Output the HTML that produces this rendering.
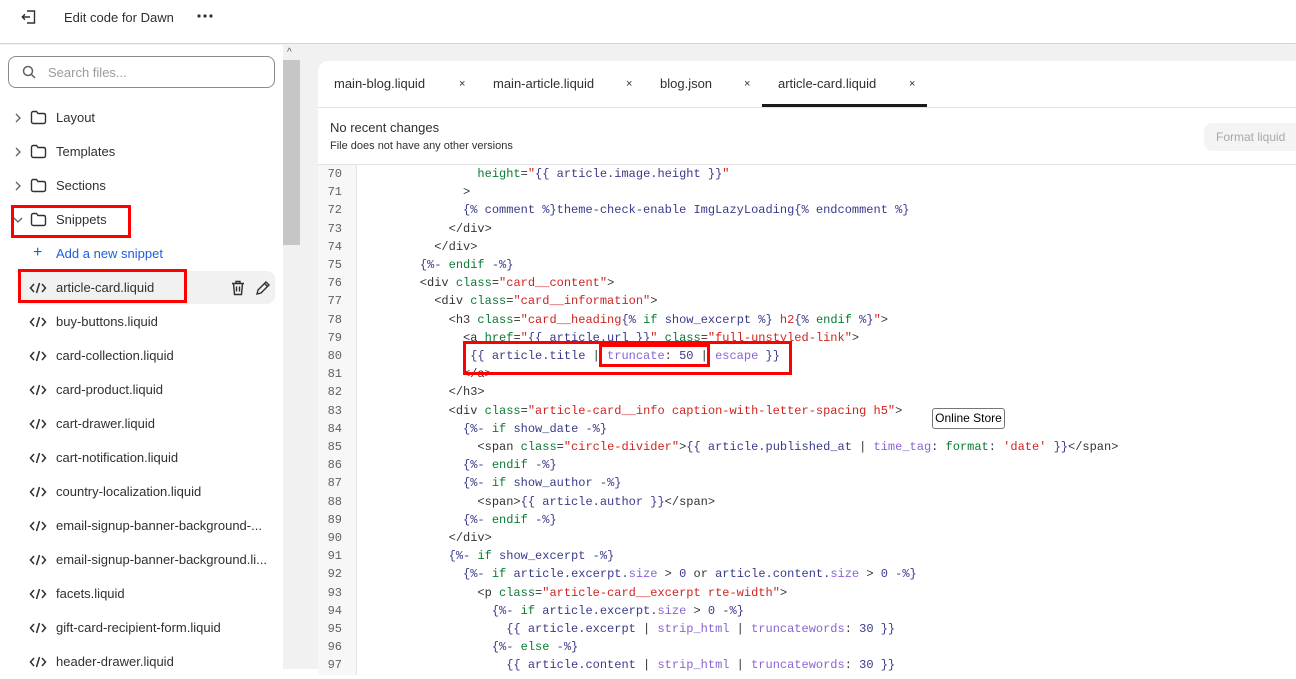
<!DOCTYPE html>
<html><head><meta charset="utf-8"><style>
*{box-sizing:border-box;margin:0;padding:0}
body{width:1296px;height:669px;overflow:hidden;background:#fff;font-family:"Liberation Sans",sans-serif;color:#303030;position:relative}
.top{position:absolute;left:0;top:0;width:1296px;height:44px;background:#fff;border-bottom:1px solid #d4d4d4;box-shadow:0 1px 2px rgba(0,0,0,.08)}
.abs{position:absolute}
.side{position:absolute;left:0;top:45px;width:283px;height:624px;background:#fff}
.row{position:absolute;left:0;width:283px;height:34px;font-size:13px;line-height:34px}
.row .t{position:absolute;left:56px;top:0}
.sb{position:absolute;left:283px;top:45px;width:17px;height:624px;background:#f1f1f1}
.main{position:absolute;left:300px;top:45px;width:996px;height:624px;background:#f1f1f1}
.card{position:absolute;left:318px;top:61px;width:978px;height:608px;background:#fff;border-radius:10px 0 0 0}
.tab{position:absolute;top:61px;height:46px;line-height:46px;font-size:13px;color:#303030}
.x{position:absolute;top:61px;height:46px;line-height:46px;font-size:11px;color:#303030}
.code{position:absolute;left:355px;top:165px;font-family:"Liberation Mono",monospace;font-size:12px;line-height:18.2px;white-space:pre;color:#333}
.nums{position:absolute;left:318px;top:165px;width:39px;height:510px;background:#f7f7f7;border-right:1px solid #e3e3e3;font-family:"Liberation Mono",monospace;font-size:12px;line-height:18.2px;color:#616161;text-align:right;padding-right:14px}
.g{color:#0b7a33}.r{color:#d1241f}.n{color:#3a3a8c}.p{color:#8b63d6}.k{color:#0b7a33}
.box{position:absolute;border:3px solid #f00}
</style></head><body>
<div class="top">
<svg class="abs" style="left:20px;top:8px" width="18" height="18" viewBox="0 0 18 18" fill="none" stroke="#303030" stroke-width="1.4"><path d="M7 3h7.5v12H7"/><path d="M10 9H2.5M5 6.3 2.3 9 5 11.7"/></svg>
<div class="abs" style="left:64px;top:10px;font-size:13px">Edit code for Dawn</div>
<svg class="abs" style="left:196px;top:13px" width="18" height="6" viewBox="0 0 18 6" fill="#303030"><circle cx="3" cy="3" r="1.6"/><circle cx="9" cy="3" r="1.6"/><circle cx="15" cy="3" r="1.6"/></svg>
</div>
<div class="side">
<div class="abs" style="left:8px;top:11px;width:267px;height:32px;border:1px solid #8a8a8a;border-radius:8px"></div>
<svg class="abs" style="left:22px;top:20px" width="14" height="14" viewBox="0 0 14 14" fill="none" stroke="#616161" stroke-width="1.5"><circle cx="6" cy="6" r="4.5"/><path d="M9.5 9.5 13 13"/></svg>
<div class="abs" style="left:48px;top:20px;font-size:13px;color:#9a9a9a">Search files...</div>
</div>
<div class="abs" style="left:20px;top:271px;width:255px;height:33px;background:#f1f1f1;border-radius:8px"></div>
<div id="rows"></div>
<div class="sb"><div class="abs" style="left:0;top:15px;width:17px;height:185px;background:#c6c6c6"></div><div class="abs" style="left:4px;top:2px;font-size:10px;color:#555">^</div></div>
<div class="main"></div>
<div class="card"></div>
<div class="abs" style="left:318px;top:107px;width:978px;height:1px;background:#e3e3e3"></div>
<div class="abs" style="left:318px;top:164px;width:978px;height:1px;background:#e3e3e3"></div>
<div class="tab" style="left:334px">main-blog.liquid</div><div class="x" style="left:459px">×</div>
<div class="tab" style="left:493px">main-article.liquid</div><div class="x" style="left:626px">×</div>
<div class="tab" style="left:660px">blog.json</div><div class="x" style="left:744px">×</div>
<div class="tab" style="left:778px">article-card.liquid</div><div class="x" style="left:909px">×</div>
<div class="abs" style="left:762px;top:104px;width:165px;height:3px;background:#1a1a1a"></div>
<div class="abs" style="left:330px;top:120px;font-size:13px">No recent changes</div>
<div class="abs" style="left:330px;top:140px;font-size:11px">File does not have any other versions</div>
<div class="abs" style="left:1204px;top:123px;width:100px;height:28px;background:#f4f4f4;border-radius:8px;font-size:12px;color:#a8a8a8;line-height:28px;padding-left:12px">Format liquid</div>
<div class="nums">70<br>71<br>72<br>73<br>74<br>75<br>76<br>77<br>78<br>79<br>80<br>81<br>82<br>83<br>84<br>85<br>86<br>87<br>88<br>89<br>90<br>91<br>92<br>93<br>94<br>95<br>96<br>97</div>
<div class="code">                 <span class="g">height</span>=<span class="r">"</span><span class="n">{{ article.image.height }}</span><span class="r">"</span>
               &gt;
               <span class="n">{% comment %}theme-check-enable ImgLazyLoading{% endcomment %}</span>
             &lt;/div&gt;
           &lt;/div&gt;
         <span class="n">{%-</span> <span class="k">endif</span> <span class="n">-%}</span>
         &lt;div <span class="g">class</span>=<span class="r">"card__content"</span>&gt;
           &lt;div <span class="g">class</span>=<span class="r">"card__information"</span>&gt;
             &lt;h3 <span class="g">class</span>=<span class="r">"card__heading</span><span class="n">{%</span> <span class="k">if</span> <span class="n">show_excerpt %}</span><span class="r"> h2</span><span class="n">{%</span> <span class="k">endif</span> <span class="n">%}</span><span class="r">"</span>&gt;
               &lt;a <span class="g">href</span>=<span class="r">"</span><span class="n">{{ article.url }}</span><span class="r">"</span> <span class="g">class</span>=<span class="r">"full-unstyled-link"</span>&gt;
                <span class="n">{{ article.title</span> | <span class="p">truncate</span>: <span class="n">50</span> | <span class="p">escape</span> <span class="n">}}</span>
               &lt;/a&gt;
             &lt;/h3&gt;
             &lt;div <span class="g">class</span>=<span class="r">"article-card__info caption-with-letter-spacing h5"</span>&gt;
               <span class="n">{%-</span> <span class="k">if</span> <span class="n">show_date -%}</span>
                 &lt;span <span class="g">class</span>=<span class="r">"circle-divider"</span>&gt;<span class="n">{{ article.published_at</span> | <span class="p">time_tag</span>: <span class="g">format</span>: <span class="r">'date'</span> <span class="n">}}</span>&lt;/span&gt;
               <span class="n">{%-</span> <span class="k">endif</span> <span class="n">-%}</span>
               <span class="n">{%-</span> <span class="k">if</span> <span class="n">show_author -%}</span>
                 &lt;span&gt;<span class="n">{{ article.author }}</span>&lt;/span&gt;
               <span class="n">{%-</span> <span class="k">endif</span> <span class="n">-%}</span>
             &lt;/div&gt;
             <span class="n">{%-</span> <span class="k">if</span> <span class="n">show_excerpt -%}</span>
               <span class="n">{%-</span> <span class="k">if</span> <span class="n">article.excerpt.</span><span class="p">size</span> &gt; <span class="n">0</span> or <span class="n">article.content.</span><span class="p">size</span> &gt; <span class="n">0 -%}</span>
                 &lt;p <span class="g">class</span>=<span class="r">"article-card__excerpt rte-width"</span>&gt;
                   <span class="n">{%-</span> <span class="k">if</span> <span class="n">article.excerpt.</span><span class="p">size</span> &gt; <span class="n">0 -%}</span>
                     <span class="n">{{ article.excerpt</span> | <span class="p">strip_html</span> | <span class="p">truncatewords</span>: <span class="n">30 }}</span>
                   <span class="n">{%-</span> <span class="k">else</span> <span class="n">-%}</span>
                     <span class="n">{{ article.content</span> | <span class="p">strip_html</span> | <span class="p">truncatewords</span>: <span class="n">30 }}</span></div>
<div class="box" style="left:463px;top:341px;width:329px;height:34px"></div>
<div class="box" style="left:599px;top:344px;width:111px;height:23px"></div>
<div class="abs" style="left:932px;top:408px;width:73px;height:21px;border:1px solid #767676;border-radius:3px;background:#fff;font-size:12px;line-height:19px;text-align:center;color:#000">Online Store</div>
<div class="box" style="left:11px;top:205px;width:120px;height:33px"></div>
<div class="box" style="left:18px;top:269px;width:169px;height:34px"></div>
<script>
var items=[["f","Layout",1],["f","Templates",1],["f","Sections",1],["f","Snippets",2],["a","Add a new snippet"],["c","article-card.liquid"],["c","buy-buttons.liquid"],["c","card-collection.liquid"],["c","card-product.liquid"],["c","cart-drawer.liquid"],["c","cart-notification.liquid"],["c","country-localization.liquid"],["c","email-signup-banner-background-..."],["c","email-signup-banner-background.li..."],["c","facets.liquid"],["c","gift-card-recipient-form.liquid"],["c","header-drawer.liquid"]];
var h="";
items.forEach(function(it,i){var y=101+i*34;var s='<div class="row" style="top:'+y+'px">';
if(it[0]=="f"){s+=(it[2]==1?'<svg class="abs" style="left:13px;top:12px" width="10" height="10" viewBox="0 0 10 10" fill="none" stroke="#616161" stroke-width="1.3"><path d="M3 1l4 4-4 4"/></svg>':'<svg class="abs" style="left:13px;top:12px" width="10" height="10" viewBox="0 0 10 10" fill="none" stroke="#616161" stroke-width="1.3"><path d="M1 3l4 4 4-4"/></svg>');
s+='<svg class="abs" style="left:30px;top:9px" width="17" height="15" viewBox="0 0 17 15" fill="none" stroke="#303030" stroke-width="1.4"><path d="M1.5 3.5Q1.5 1.5 3.5 1.5H6.5L8 3.5H13.5Q15.5 3.5 15.5 5.5V11.5Q15.5 13.5 13.5 13.5H3.5Q1.5 13.5 1.5 11.5Z"/></svg>';
s+='<span class="t">'+it[1]+'</span>';}
else if(it[0]=="a"){s+='<span class="abs" style="left:33px;top:-1px;color:#1d5fdc;font-size:16px">+</span><span class="t" style="color:#1d5fdc">'+it[1]+'</span>';}
else{s+='<svg class="abs" style="left:29px;top:10px" width="18" height="14" viewBox="0 0 18 14" fill="none" stroke="#303030" stroke-width="1.5"><path d="M5 3 1.5 7 5 11M13 3l3.5 4L13 11M10.5 2 7.5 12"/></svg><span class="t">'+it[1]+'</span>';
if(i==5){s+='<svg class="abs" style="left:231px;top:9px" width="14" height="16" viewBox="0 0 14 16" fill="none" stroke="#303030" stroke-width="1.4"><path d="M1 3.5h12M5 3.5V1.5h4v2M2.5 3.5l1 11h7l1-11M5.5 6.5v5M8.5 6.5v5"/></svg><svg class="abs" style="left:255px;top:9px" width="16" height="16" viewBox="0 0 16 16" fill="none" stroke="#303030" stroke-width="1.4"><path d="M2 14l1-4 8-8 3 3-8 8zM9.5 3.5l3 3"/></svg>';}}
s+='</div>';h+=s;});
document.getElementById("rows").outerHTML=h;
</script>
</body></html>
